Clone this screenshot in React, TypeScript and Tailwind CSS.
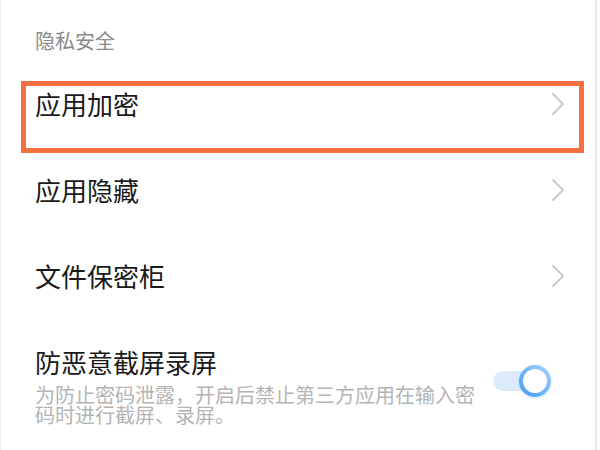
import React from "react";

function Chevron() {
  return (
    <svg width="14" height="24" viewBox="0 0 14 24" fill="none" className="shrink-0">
      <path d="M2 2 L12 12 L2 22" stroke="#c8c8c8" strokeWidth="1.8" strokeLinecap="round" strokeLinejoin="round" />
    </svg>
  );
}

function Row({ title }: { title: string }) {
  return (
    <div className="h-[86px] flex items-center justify-between pr-[30px]">
      <span className="text-[26px] leading-[30px] text-[#1a1a1a]">{title}</span>
      <Chevron />
    </div>
  );
}

export default function App() {
  return (
    <div
      className="w-[600px] h-[450px] bg-white relative overflow-hidden flex"
      style={{ fontFamily: '"Noto Sans CJK SC", "Noto Sans", sans-serif' }}
    >
      <div className="w-[595px] border-l border-[#ededed] pl-[34px] flex flex-col">
        <div className="pt-[31px] pb-[10px] text-[20px] leading-[20px] text-[#8a8a8a]">隐私安全</div>
        <Row title="应用加密" />
        <Row title="应用隐藏" />
        <Row title="文件保密柜" />
        <div className="pt-[28px] flex items-start justify-between pr-[44px]">
          <div className="flex flex-col">
            <span className="text-[26px] leading-[30px] text-[#1a1a1a]">防恶意截屏录屏</span>
            <p className="mt-[8px] w-[450px] text-[20px] leading-[20px] text-[#b4b4b4]">
              为防止密码泄露，开启后禁止第三方应用在输入密码时进行截屏、录屏。
            </p>
          </div>
          <div className="relative mt-[18px] w-[58px] h-[32px] shrink-0">
            <div className="absolute left-0 top-[6px] w-[46px] h-[20px] rounded-full bg-[#dcebfc]" />
            <div className="absolute right-0 top-0 w-[32px] h-[32px] rounded-full bg-gradient-to-tr from-[#3f98ee] to-[#a3d3ff] p-[4px] shadow-[0_1px_3px_rgba(60,140,230,0.25)]">
              <div className="w-full h-full rounded-full bg-white" />
            </div>
          </div>
        </div>
      </div>
      <div className="w-[2px] h-full bg-[#e6e6e6]" />
      <div className="w-[3px] h-full bg-white" />
      <div className="absolute left-[21px] top-[81px] w-[563px] h-[72px] border-[5px] border-[#f56f40]" />
    </div>
  );
}
